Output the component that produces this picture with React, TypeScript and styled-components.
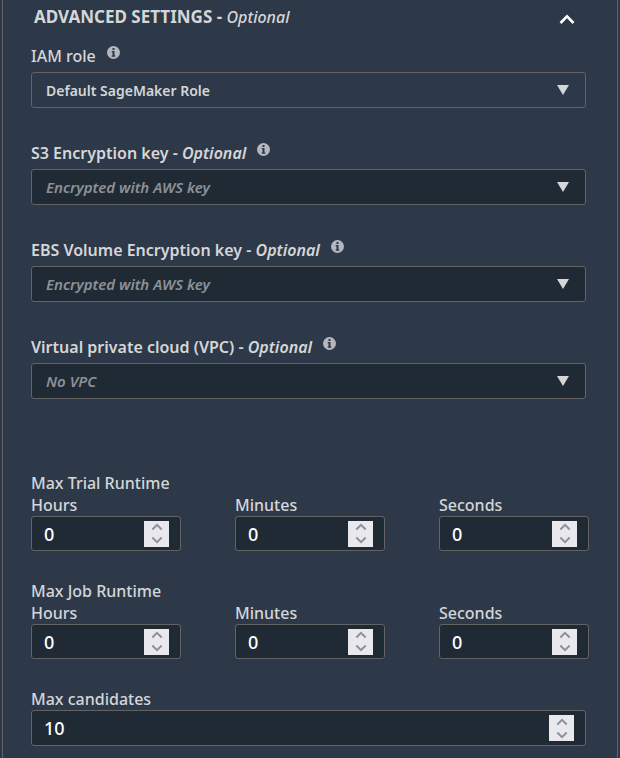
import React, { useId, useState } from "react";
import styled, { createGlobalStyle } from "styled-components";

const GlobalStyle = createGlobalStyle`
  *, *::before, *::after { box-sizing: border-box; }
  body {
    margin: 0;
    background: #2d3949;
    color: #d5d6d8;
    font-family: "Noto Sans", sans-serif;
    font-size: 16px;
    font-weight: 500;
    line-height: 22px;
  }
`;

const Panel = styled.section`
  margin: 0 2px;
  min-height: 100vh;
  padding: 6px 31px 12px 28px;
  border: solid #636363;
  border-width: 0 1px;
`;

const Header = styled.header`
  display: flex;
  align-items: center;
  justify-content: space-between;
  padding: 0 8px 0 3px;
  margin-bottom: 17px;
`;

const Title = styled.h2`
  margin: 0;
  font-size: 17px;
  font-weight: 700;
  line-height: 22px;
  em {
    font-size: 16px;
    font-weight: 500;
  }
`;

const ToggleButton = styled.button`
  display: flex;
  padding: 4px 3px 0;
  border: 0;
  background: none;
  color: #fff;
  cursor: pointer;
`;

const SelectField = styled.div`
  margin-bottom: 34px;
`;

const LabelRow = styled.div`
  display: flex;
  align-items: flex-start;
  gap: 11px;
  margin-bottom: 5px;
`;

const InfoButton = styled.button`
  display: flex;
  padding: 1px 0 0;
  border: 0;
  background: none;
  color: #b4b7be;
`;

const SelectWrap = styled.div`
  position: relative;
`;

const Select = styled.select<{ $muted: boolean }>`
  display: block;
  width: 100%;
  height: 36px;
  padding: 0 40px 0 14px;
  appearance: none;
  border: 1px solid #636363;
  border-radius: 3px;
  background: ${(p) => (p.$muted ? "#202a35" : "#2d3949")};
  color: ${(p) => (p.$muted ? "#8c9197" : "#d5d6d8")};
  font-family: "Noto Sans", sans-serif;
  font-size: ${(p) => (p.$muted ? 15 : 14)}px;
  font-style: ${(p) => (p.$muted ? "italic" : "normal")};
  font-weight: 600;
`;

const Arrow = styled.svg`
  position: absolute;
  top: 13px;
  right: 17px;
  pointer-events: none;
`;

const Runtime = styled.fieldset`
  min-width: 0;
  margin: 0 -3px 29px 0;
  padding: 0;
  border: 0;
`;

const Legend = styled.legend`
  padding: 0;
`;

const RuntimeGroup = styled.div`
  padding-top: 39px;
`;

const Columns = styled.div`
  display: grid;
  grid-template-columns: repeat(3, minmax(0, 1fr));
  column-gap: 54px;
`;

const Label = styled.label<{ $strong?: boolean }>`
  display: block;
  font-weight: ${(p) => (p.$strong ? 600 : 500)};
`;

const NumberBox = styled.div<{ $tall?: boolean }>`
  display: flex;
  align-items: center;
  height: ${(p) => (p.$tall ? 36 : 35)}px;
  padding: 0 11px 0 12px;
  border: 1px solid #636363;
  border-radius: 3px;
  background: #202a35;
`;

const NumberInput = styled.input`
  flex: 1;
  width: 0;
  min-width: 0;
  padding: 0;
  border: 0;
  outline: 0;
  background: none;
  color: #fff;
  font: 500 18px "Noto Sans", sans-serif;
  appearance: textfield;
  &::-webkit-inner-spin-button { display: none; }
`;

const Spinner = styled.div`
  display: grid;
  grid-template-rows: 1fr 1fr;
  width: 25px;
  height: 26px;
  background: #e9e9ed;
`;

const StepButton = styled.button`
  display: grid;
  place-items: center;
  padding: 0;
  border: 0;
  background: none;
  color: #8f8f9d;
`;

function InfoIcon() {
  return (
    <svg width="13" height="13" viewBox="0 0 13 13" aria-hidden="true">
      <circle cx="6.5" cy="6.5" r="6.5" fill="currentColor" />
      <path d="M5.5 2h2v2h-2zM4.7 5.1h2.8v4.5h.8v1.1H4.7V9.6h.8V6.2h-.8z" fill="#2d3949" />
    </svg>
  );
}

function StepIcon({ down }: { down?: boolean }) {
  return (
    <svg width="12" height="8" viewBox="0 0 12 8" fill="none" stroke="currentColor" strokeWidth="2" aria-hidden="true">
      <path d={down ? "M1.3 1.5 6 6.2l4.7-4.7" : "M1.3 6.5 6 1.8l4.7 4.7"} />
    </svg>
  );
}

type DropdownProps = { label: string; value: string; optional?: boolean };

function Dropdown({ label, value, optional = false }: DropdownProps) {
  const id = useId();
  return (
    <SelectField>
      <LabelRow>
        <Label htmlFor={id} $strong={optional}>
          {label}
          {optional && <> - <em>Optional</em></>}
        </Label>
        <InfoButton type="button" aria-label={`About ${label}`}><InfoIcon /></InfoButton>
      </LabelRow>
      <SelectWrap>
        <Select id={id} $muted={optional}>
          <option>{value}</option>
        </Select>
        <Arrow width="12" height="10" viewBox="0 0 12 10" aria-hidden="true">
          <path d="M0 0h12L6 10z" fill="#d5d6d8" />
        </Arrow>
      </SelectWrap>
    </SelectField>
  );
}

function NumberField({ label, initial, tall }: { label: string; initial: number; tall?: boolean }) {
  const id = useId();
  const [value, setValue] = useState(String(initial));
  const step = (by: number) => setValue((v) => String(Math.max(0, Number(v) + by)));
  return (
    <div>
      <Label htmlFor={id}>{label}</Label>
      <NumberBox $tall={tall}>
        <NumberInput id={id} type="number" min={0} value={value} onChange={(e) => setValue(e.target.value)} />
        <Spinner>
          <StepButton type="button" aria-label={`Increase ${label}`} onClick={() => step(1)}><StepIcon /></StepButton>
          <StepButton type="button" aria-label={`Decrease ${label}`} onClick={() => step(-1)}><StepIcon down /></StepButton>
        </Spinner>
      </NumberBox>
    </div>
  );
}

function RuntimeFields({ title }: { title: string }) {
  return (
    <Runtime>
      <Legend>{title}</Legend>
      <Columns>
        <NumberField label="Hours" initial={0} />
        <NumberField label="Minutes" initial={0} />
        <NumberField label="Seconds" initial={0} />
      </Columns>
    </Runtime>
  );
}

export default function App() {
  const [open, setOpen] = useState(true);
  return (
    <>
      <GlobalStyle />
      <Panel>
        <Header>
          <Title>ADVANCED SETTINGS - <em>Optional</em></Title>
          <ToggleButton type="button" aria-label="Toggle advanced settings" aria-expanded={open} onClick={() => setOpen(!open)}>
            <svg width="16" height="11" viewBox="0 0 16 11" fill="none" stroke="currentColor" strokeWidth="2.6" aria-hidden="true">
              <path d="M1.5 9 8 2.4 14.5 9" />
            </svg>
          </ToggleButton>
        </Header>
        {open && (
          <>
            <Dropdown label="IAM role" value="Default SageMaker Role" />
            <Dropdown label="S3 Encryption key" value="Encrypted with AWS key" optional />
            <Dropdown label="EBS Volume Encryption key" value="Encrypted with AWS key" optional />
            <Dropdown label="Virtual private cloud (VPC)" value="No VPC" optional />
            <RuntimeGroup>
              <RuntimeFields title="Max Trial Runtime" />
              <RuntimeFields title="Max Job Runtime" />
            </RuntimeGroup>
            <NumberField label="Max candidates" initial={10} tall />
          </>
        )}
      </Panel>
    </>
  );
}
